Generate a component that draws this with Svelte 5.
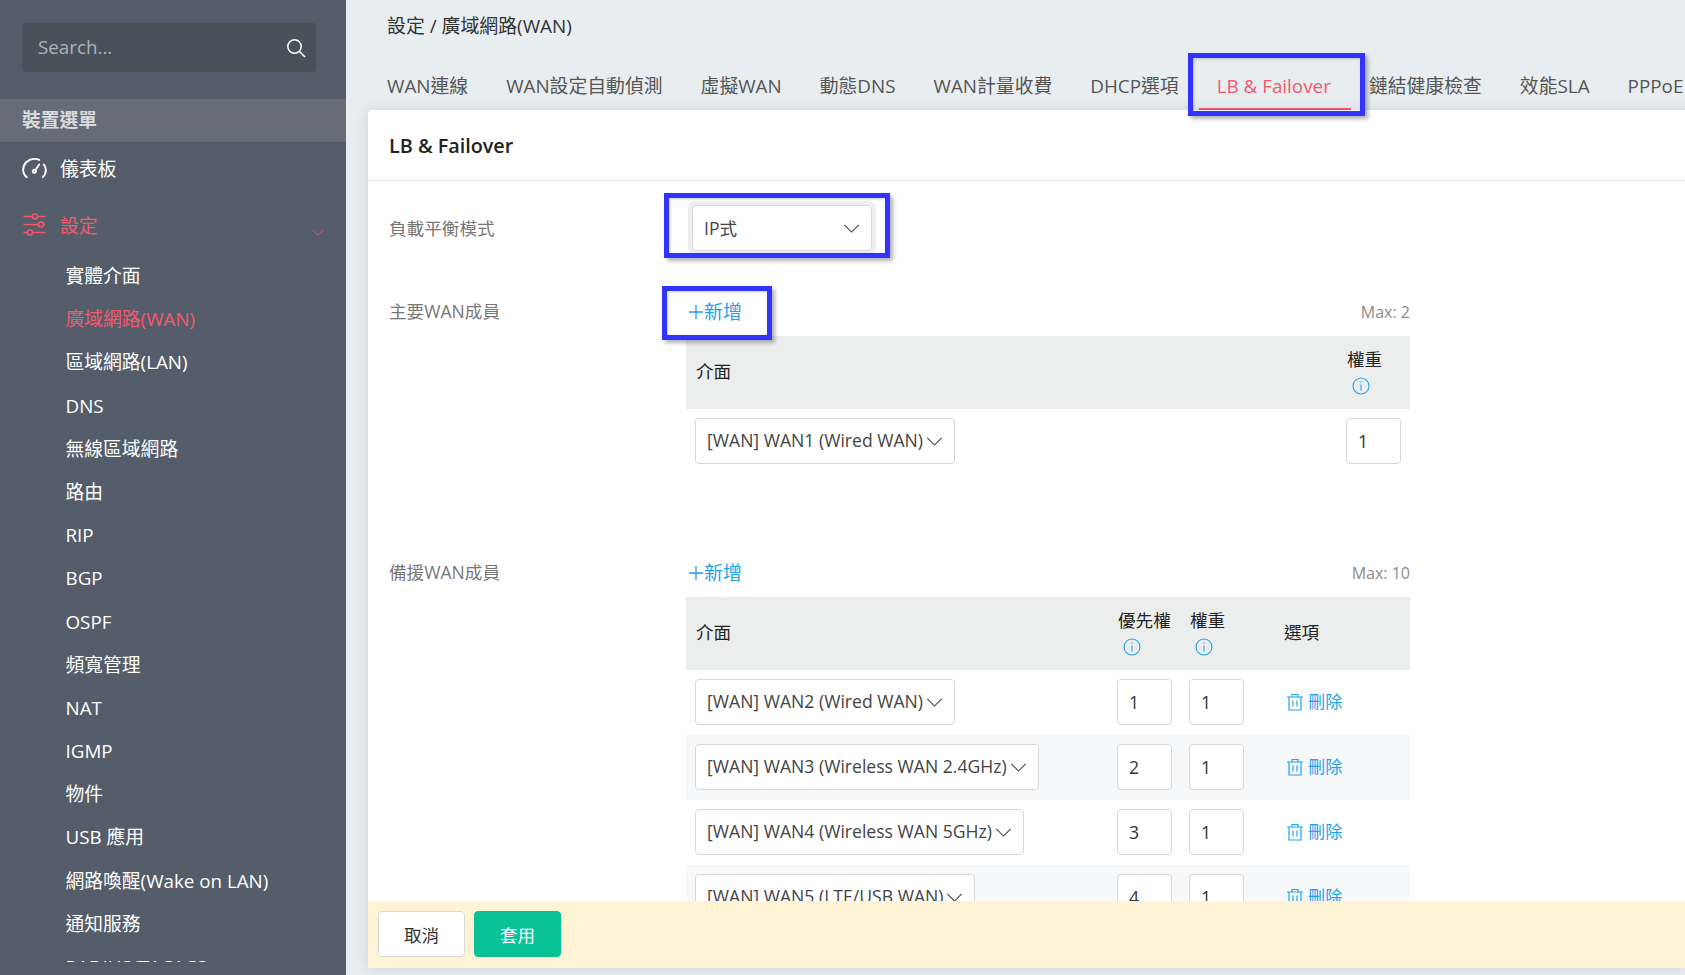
<script>
  const subs = ['實體介面','廣域網路(WAN)','區域網路(LAN)','DNS','無線區域網路','路由','RIP','BGP','OSPF','頻寬管理','NAT','IGMP','物件','USB 應用','網路喚醒(Wake on LAN)','通知服務','RADIUS/TACACS'];
  const tabs = ['WAN連線','WAN設定自動偵測','虛擬WAN','動態DNS','WAN計量收費','DHCP選項','LB & Failover','鏈結健康檢查','效能SLA','PPPoE'];
  const backups = [
    { name: '[WAN] WAN2 (Wired WAN)', p: 1 },
    { name: '[WAN] WAN3 (Wireless WAN 2.4GHz)', p: 2 },
    { name: '[WAN] WAN4 (Wireless WAN 5GHz)', p: 3 },
    { name: '[WAN] WAN5 (LTE/USB WAN)', p: 4 }
  ];
</script>

{#snippet chevron(cls)}
  <svg class={cls} viewBox="0 0 18 10" fill="none" stroke="currentColor" stroke-width="1.2"><path d="M1 1l8 8 8-8"/></svg>
{/snippet}
{#snippet info()}
  <svg class="info" viewBox="0 0 18 18" fill="none" stroke="currentColor" stroke-width="1.1"><circle cx="9" cy="9" r="8"/><path d="M9 7.500v6M9 4.400v1.400"/></svg>
{/snippet}
{#snippet add()}
  <div class="add-link"><svg viewBox="0 0 14 14" fill="none" stroke="currentColor" stroke-width="1.3"><path d="M7 0v14M0 7h14"/></svg>新增</div>
{/snippet}

<div class="root">
  <aside class="sidebar">
    <div class="search">
      <span>Search...</span>
      <svg viewBox="0 0 20 20" fill="none" stroke="#fff" stroke-width="1.5"><circle cx="8.500" cy="8.500" r="6.700"/><path d="M13.400 13.400l5.600 5.600"/></svg>
    </div>
    <div class="section">裝置選單</div>
    <nav class="nav">
      <div class="item">
        <svg class="item-icon" viewBox="0 0 26 24" fill="none" stroke="#fff" stroke-width="2" stroke-linecap="round"><path d="M5 21.500C2.500 19.500 1.200 16.800 1.200 14 1.200 7.500 6.500 2.500 13 2.500c1.800 0 3.400.4 4.900 1.100"/><path d="M22.800 8.500c1.300 1.700 2 3.700 2 5.800 0 2.700-1.200 5.400-3.200 7.200"/><path d="M17.800 8.500l-3.800 5.500"/><circle cx="12.800" cy="15.500" r="1.600"/></svg>
        <span>儀表板</span>
      </div>
      <div class="item active-parent">
        <svg class="item-icon" viewBox="0 0 24 24" fill="none" stroke="currentColor" stroke-width="1.500"><path d="M1 3.500h9M15 3.500h8M1 11.500h15M21 11.500h2M1 19.500h4M10 19.500h13"/><circle cx="12.500" cy="3.500" r="2.500"/><circle cx="18.500" cy="11.500" r="2.500"/><circle cx="7.500" cy="19.500" r="2.500"/></svg>
        <span>設定</span>
        {@render chevron('side-chev')}
      </div>
      {#each subs as s, i}
        <div class="sub" class:on={i === 1}>{s}</div>
      {/each}
    </nav>
  </aside>

  <main class="main">
    <div class="crumb">設定 / 廣域網路(WAN)</div>
    <div class="tabs">
      {#each tabs as t}
        <div class="tab" class:active={t === 'LB & Failover'}>{t}</div>
      {/each}
    </div>
    <section class="card">
      <h1 class="card-title">LB &amp; Failover</h1>
      <div class="body">
        <div class="form-row mode">
          <div class="label">負載平衡模式</div>
          <div class="select mode-select"><span>IP式</span>{@render chevron('sel-chev')}</div>
        </div>

        <div class="form-row member first">
          <div class="label add-label">主要WAN成員</div>
          <div class="field">
            <div class="add-row">{@render add()}<span class="max">Max: 2</span></div>
            <div class="grid g1 head">
              <div>介面</div>
              <div class="stack"><span>權重</span>{@render info()}</div>
            </div>
            <div class="grid g1 row">
              <div><div class="select"><span>[WAN] WAN1 (Wired WAN)</span>{@render chevron('sel-chev')}</div></div>
              <div class="num">1</div>
            </div>
          </div>
        </div>

        <div class="form-row member second">
          <div class="label add-label">備援WAN成員</div>
          <div class="field">
            <div class="add-row">{@render add()}<span class="max">Max: 10</span></div>
            <div class="grid g2 head">
              <div>介面</div>
              <div class="stack"><span>優先權</span>{@render info()}</div>
              <div class="stack"><span>權重</span>{@render info()}</div>
              <div class="opt">選項</div>
            </div>
            {#each backups as b, i}
              <div class="grid g2 row" class:alt={i % 2 === 1}>
                <div><div class="select"><span>{b.name}</span>{@render chevron('sel-chev')}</div></div>
                <div class="num">{b.p}</div>
                <div class="num">1</div>
                <div class="del">
                  <svg viewBox="0 0 16 18" fill="none" stroke="currentColor" stroke-width="1.2"><path d="M0 4h16M5 4V1.500h6V4M2 4v13h12V4M6 7.500v6M10 7.500v6"/></svg>
                  刪除
                </div>
              </div>
            {/each}
          </div>
        </div>
      </div>
      <footer class="footer">
        <button class="btn">取消</button>
        <button class="btn primary">套用</button>
      </footer>
    </section>
  </main>

  <div class="mark m-tab"></div>
  <div class="mark m-sel"></div>
  <div class="mark m-add"></div>
</div>

<style>
  :global(body) { margin: 0; background: #e8edf0; }
  .root {
    position: relative;
    display: flex;
    width: 1685px;
    height: 975px;
    overflow: hidden;
    font-family: "Open Sans", "Noto Sans CJK TC", sans-serif;
    font-size: 17.6px;
    color: #333;
  }
  .sidebar {
    width: 346px;
    flex: none;
    height: 975px;
    background: #545d69;
    color: #fff;
    display: flex;
    flex-direction: column;
    padding-bottom: 13px;
    box-sizing: border-box;
    font-size: 18.8px;
  }
  .search {
    margin: 23px 30px 27px 22px;
    height: 49px;
    flex: none;
    border-radius: 4px;
    background: #49515a;
    display: flex;
    align-items: center;
    justify-content: space-between;
    padding: 0 10px 2px 16px;
    box-sizing: border-box;
    color: #b0b4b9;
  }
  .search svg { width: 20px; height: 20px; margin-top: 2px; }
  .section {
    height: 43px;
    flex: none;
    line-height: 43px;
    padding-left: 22px;
    background: #666d78;
    color: #d8dadd;
    font-weight: 700;
  }
  .nav { flex: 1; overflow: hidden; }
  .item {
    height: 52px;
    display: flex;
    align-items: center;
    padding-left: 22px;
    position: relative;
  }
  .item-icon { width: 25px; height: 24px; margin-right: 13px; flex: none; }
  .active-parent { height: 56px; margin: 3px 0 2px; color: #f4596e; }
  .side-chev { position: absolute; left: 312px; top: 32px; width: 12px; height: 7px; }
  .sub { height: 43.2px; line-height: 43.2px; padding-left: 65.5px; white-space: nowrap; }
  .sub.on { color: #f4596e; }

  .main { flex: 1; min-width: 0; height: 975px; display: flex; flex-direction: column; }
  .crumb { padding: 14px 0 0 41px; line-height: 24px; height: 38px; flex: none; margin-bottom: 10px; font-size: 18.9px; }
  .tabs { display: flex; gap: 38px; padding-left: 41px; height: 48px; flex: none; white-space: nowrap; color: #555; font-size: 18.84px; }
  .tab { position: relative; line-height: 49px; flex: none; }
  .tab.active { color: #f4596e; }
  .tab.active::after { content: ""; position: absolute; left: -18px; right: -20px; bottom: 0; height: 2px; background: #f0506a; }
  .card {
    margin-left: 22px;
    height: 858px;
    flex: none;
    background: #fff;
    border-radius: 4px 0 0 0;
    box-shadow: 0 0 12px rgba(120, 140, 160, .25);
    display: flex;
    flex-direction: column;
  }
  .card-title {
    margin: 0;
    height: 70px;
    flex: none;
    line-height: 71px;
    padding-left: 21px;
    font-size: 19.8px;
    font-weight: 600;
    color: #222;
    border-bottom: 1px solid #e8e8e8;
  }
  .body { flex: 1; min-height: 0; overflow: hidden; padding-left: 21px; }
  .form-row { display: flex; }
  .label { width: 297px; flex: none; color: #777; }
  .mode { margin-top: 24px; align-items: center; }
  .mode > .label { padding-bottom: 2px; }
  .mode-select { width: 180px; margin-left: 6px; justify-content: space-between; box-shadow: 0 0 0 4px #eeeeee; }
  .member.first { margin-top: 46px; }
  .member.second { margin-top: 84px; }
  .add-label { line-height: 28px; }
  .field { width: 724px; flex: none; }
  .add-row { height: 30px; margin-bottom: 9px; display: flex; align-items: center; justify-content: space-between; }
  .add-link { color: #1f9fef; display: flex; align-items: center; gap: 1px; margin: 0 0 2px 3px; font-size: 19px; }
  .add-link svg { width: 14px; height: 14px; margin-top: 1px; }
  .max { color: #8c8c8c; font-size: 16px; }
  .grid { display: grid; padding-left: 9px; align-items: center; column-gap: 17px; }
  .g1 { grid-template-columns: 1fr 55px; padding-right: 9px; }
  .g2 { grid-template-columns: 1fr 55px 55px 148px; padding-right: 1px; }
  .head { height: 73px; box-sizing: border-box; background: #eceeee; color: #222; padding-left: 10px; padding-bottom: 4px; }
  .row { height: 65px; padding-bottom: 1px; box-sizing: border-box; }
  .row.alt { background: #f7f8fa; }
  .stack { display: flex; flex-direction: column; white-space: nowrap; line-height: 24px; padding-left: 1px; }
  .info { width: 18px; height: 18px; color: #1f9fef; margin: 6px 0 0 5px; }
  .opt { margin-left: 23px; }
  .select {
    display: inline-flex;
    align-items: center;
    gap: 3px;
    height: 46px;
    box-sizing: border-box;
    padding: 0 11px 2px 11px;
    border: 1px solid #d8d8d8;
    border-radius: 4px;
    background: #fff;
    white-space: nowrap;
    color: #444;
  }
  .sel-chev { width: 17px; height: 9px; flex: none; color: #444; margin-top: 3px; }
  .num {
    height: 46px;
    box-sizing: border-box;
    border: 1px solid #d8d8d8;
    border-radius: 4px;
    background: #fff;
    padding-left: 11px;
    line-height: 44px;
  }
  .del { margin-left: 26px; padding-bottom: 4px; display: flex; align-items: center; gap: 5px; color: #1fa4f0; white-space: nowrap; font-size: 17.2px; }
  .del svg { width: 16px; height: 18px; margin-top: 3px; }
  .footer {
    height: 67px;
    flex: none;
    background: #fef4d5;
    display: flex;
    align-items: center;
    gap: 9px;
    padding: 0 0 1px 10px;
    box-sizing: border-box;
  }
  .btn {
    width: 87px;
    height: 46px;
    border: 1px solid #d8d8d8;
    border-radius: 4px;
    background: #fff;
    font: inherit;
    color: #333;
  }
  .primary { background: #09c296; border-color: #09c296; color: #fff; }

  .mark {
    position: absolute;
    box-sizing: border-box;
    border: 5px solid #3333ff;
    box-shadow: 3px 3px 4px rgba(0, 0, 0, .3), inset 1px 1px 3px rgba(0, 0, 0, .2);
  }
  .m-tab { left: 1188px; top: 53px; width: 177px; height: 63px; }
  .m-sel { left: 664px; top: 193px; width: 226px; height: 65px; }
  .m-add { left: 662px; top: 286px; width: 110px; height: 54px; }
</style>
